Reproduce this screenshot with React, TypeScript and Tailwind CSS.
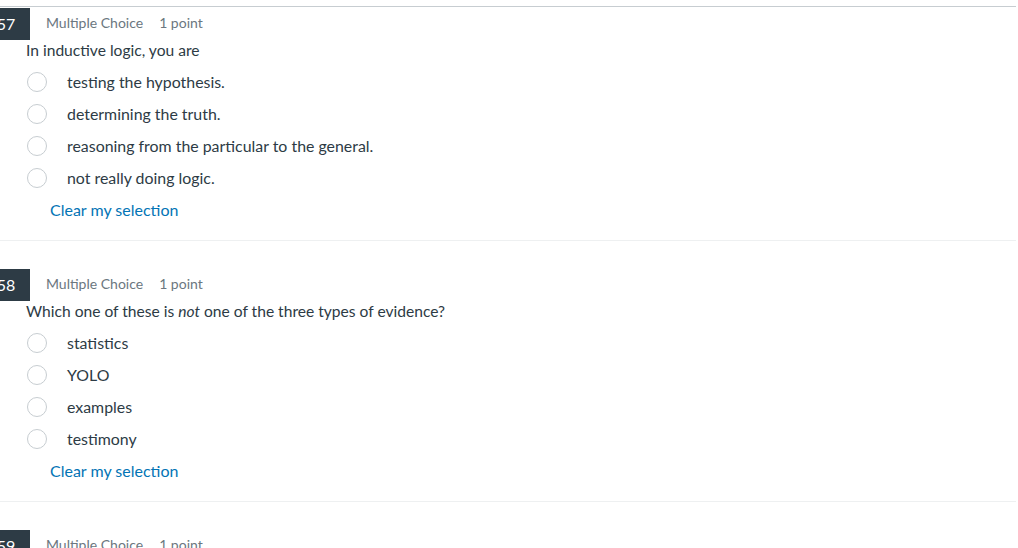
import React from 'react';

type Question = {
  num: number;
  text: React.ReactNode;
  options: string[];
};

const questions: Question[] = [
  {
    num: 57,
    text: 'In inductive logic, you are',
    options: [
      'testing the hypothesis.',
      'determining the truth.',
      'reasoning from the particular to the general.',
      'not really doing logic.',
    ],
  },
  {
    num: 58,
    text: (
      <>
        Which one of these is <em>not</em> one of the three types of evidence?
      </>
    ),
    options: ['statistics', 'YOLO', 'examples', 'testimony'],
  },
  {
    num: 59,
    text: 'Which of the following is a fallacy?',
    options: ['ad hominem', 'deduction', 'induction', 'analogy'],
  },
];

const QuestionBlock = ({ q, first }: { q: Question; first?: boolean }) => (
  <div className={`${first ? 'pt-[1px]' : 'pt-[28px]'} pb-[14px] border-b border-[#eef0f1]`}>
    <div className="flex items-center h-[32px]">
      <div className="w-[48px] ml-[-18px] h-[32px] bg-[#2d3b45] text-white text-[16px] flex items-center justify-center">
        {q.num}
      </div>
      <div className="flex items-center pb-[3px]">
        <span className="ml-[16px] text-[14px] text-[#6b7780]">Multiple Choice</span>
        <span className="ml-[16px] text-[14px] text-[#6b7780]">1 point</span>
      </div>
    </div>
    <div className="pl-[26px] text-[15.6px] leading-[20px] text-[#2d3b45]">{q.text}</div>
    <div className="mt-[6px]">
      {q.options.map((opt, i) => (
        <label key={i} className="flex items-center h-[32px] pl-[27px] cursor-pointer">
          <span className="w-[20px] h-[20px] rounded-full border border-[#c7cdd1] bg-white shrink-0" />
          <span className="ml-[20px] text-[15.9px] text-[#2d3b45]">{opt}</span>
        </label>
      ))}
    </div>
    <div className="h-[32px] flex items-center pl-[50px]">
      <button className="text-[16px] text-[#0374b5]">Clear my selection</button>
    </div>
  </div>
);

export default function App() {
  return (
    <div
      className="w-[1018px] h-[548px] overflow-hidden bg-white"
      style={{ fontFamily: 'Lato, "Noto Sans", sans-serif' }}
    >
      <div className="w-[1016px] mt-[6px] border-t border-[#c7cdd1]">
        {questions.map((q, i) => (
          <QuestionBlock key={q.num} q={q} first={i === 0} />
        ))}
      </div>
    </div>
  );
}
